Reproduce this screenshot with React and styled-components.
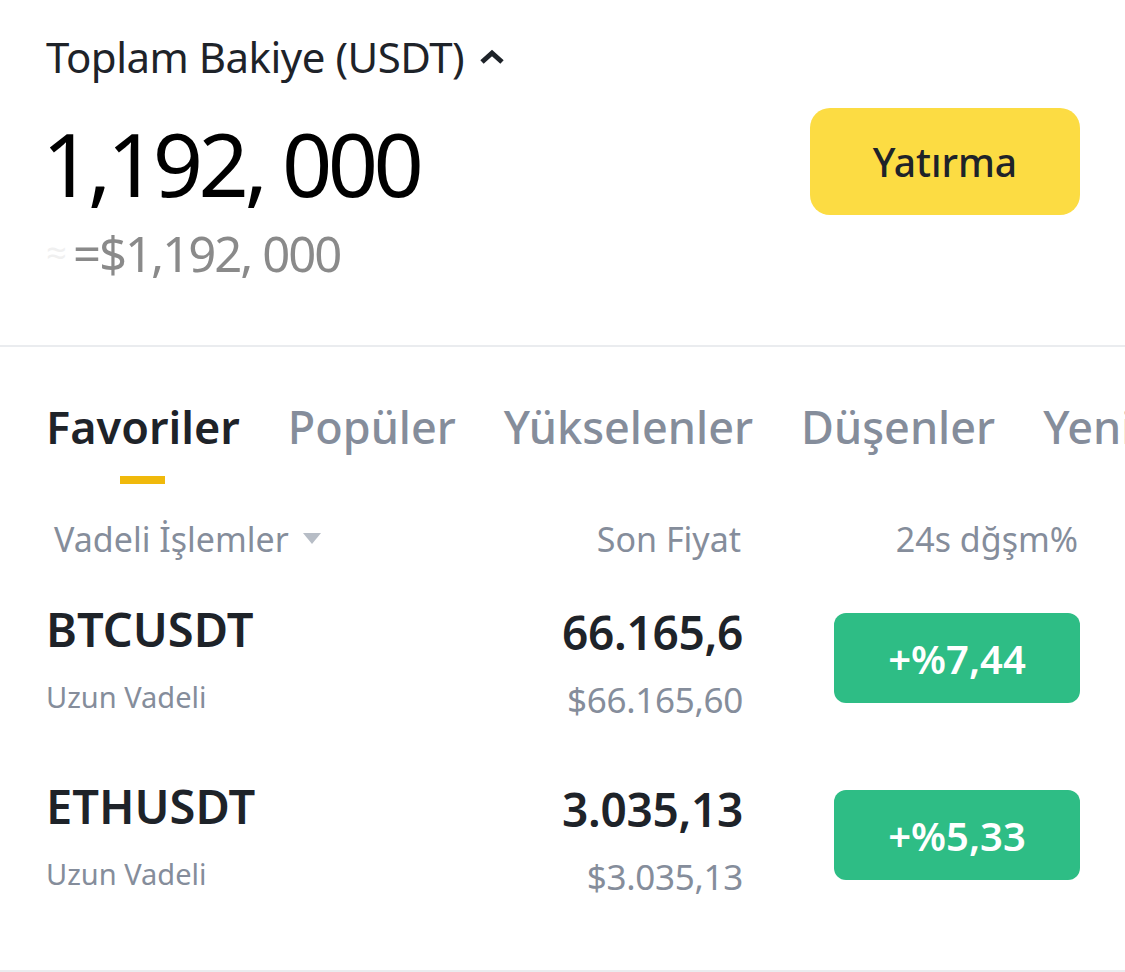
import React from 'react'
import styled, { createGlobalStyle } from 'styled-components'

const GlobalStyle = createGlobalStyle`
  html, body {
    margin: 0;
    padding: 0;
    background: #ffffff;
  }
  body {
    font-family: "Noto Sans", "Open Sans", Roboto, sans-serif;
    color: #1e2329;
    width: 1125px;
    overflow: hidden;
  }
`

const Page = styled.div`
  width: 1125px;
  height: 972px;
  display: flex;
  flex-direction: column;
  overflow: hidden;
`

const BalanceSection = styled.section`
  padding: 31px 45px 0 46px;
  height: 347px;
  box-sizing: border-box;
  border-bottom: 2px solid #eaecef;
`

const TitleRow = styled.div`
  display: flex;
  align-items: center;
  gap: 15px;
  font-size: 42px;
  line-height: 52px;
  letter-spacing: -0.5px;
  color: #1e2329;
`

const BalanceRow = styled.div`
  display: flex;
  justify-content: space-between;
  align-items: flex-start;
`

const Amounts = styled.div`
  display: flex;
  flex-direction: column;
`

const BigAmount = styled.div`
  margin-top: 30px;
  margin-left: -4px;
  font-size: 88px;
  line-height: 100px;
  letter-spacing: -4.5px;
  color: #000;
`

const FiatAmount = styled.div`
  display: flex;
  align-items: center;
  margin-top: 12px;
  font-size: 49px;
  line-height: 56px;
  letter-spacing: -2px;
  color: #8a8a8a;
`

const Ghost = styled.span`
  width: 27px;
  font-size: 36px;
  color: #f0f0f0;
`

const DepositButton = styled.button`
  margin-top: 25px;
  width: 270px;
  height: 107px;
  border: none;
  border-radius: 20px;
  background: #fcdc43;
  color: #1e2329;
  font-family: inherit;
  font-size: 39px;
  font-weight: 500;
  cursor: pointer;
`

const Tabs = styled.nav`
  display: flex;
  gap: 48px;
  padding: 50px 0 0 46px;
  white-space: nowrap;
  overflow: hidden;
`

const Tab = styled.div`
  display: flex;
  flex-direction: column;
  align-items: center;
  font-size: 45px;
  line-height: 60px;
  font-weight: ${p => (p.$active ? 600 : 500)};
  color: ${p => (p.$active ? '#1e2329' : '#858d9b')};

  &::after {
    content: '';
    margin-top: 19px;
    width: 45px;
    height: 8px;
    background: ${p => (p.$active ? '#f0b90b' : 'transparent')};
  }
`

const Grid = styled.div`
  display: grid;
  grid-template-columns: 1fr 300px 246px;
  column-gap: 91px;
  padding: 0 45px 0 46px;
  align-items: start;
`

const HeadRow = styled(Grid)`
  margin-top: 31px;
  padding-left: 54px;
  font-size: 34px;
  line-height: 48px;
  color: #858d9b;
`

const HeadCell = styled.div`
  display: flex;
  align-items: center;
  gap: 14px;
  justify-content: ${p => (p.$right ? 'flex-end' : 'flex-start')};
  margin-right: ${p => (p.$right ? '2px' : '0')};
`

const Row = styled(Grid)`
  margin-top: ${p => (p.$first ? '41px' : '61px')};
`

const Symbol = styled.div`
  font-size: 47px;
  font-weight: 600;
  line-height: 50px;
  color: #1e2329;
`

const SubText = styled.div`
  margin-top: 23px;
  font-size: 29px;
  line-height: 40px;
  color: #858d9b;
`

const PriceCell = styled.div`
  text-align: right;
`

const Price = styled.div`
  margin-top: 3px;
  font-size: 46px;
  font-weight: 600;
  line-height: 50px;
  letter-spacing: -0.3px;
  color: #1e2329;
`

const FiatPrice = styled.div`
  margin-top: 23px;
  font-size: 35px;
  line-height: 40px;
  letter-spacing: -0.3px;
  color: #858d9b;
`

const Badge = styled.div`
  margin-top: 9px;
  height: 90px;
  border-radius: 12px;
  background: #2ebd85;
  color: #fff;
  font-size: 40px;
  font-weight: 600;
  display: flex;
  align-items: center;
  justify-content: center;
`

const BottomLine = styled.div`
  margin-top: auto;
  height: 2px;
  background: #eaecef;
`

const rows = [
  { sym: 'BTCUSDT', price: '66.165,6', fiat: '$66.165,60', change: '+%7,44' },
  { sym: 'ETHUSDT', price: '3.035,13', fiat: '$3.035,13', change: '+%5,33' },
]

const tabs = ['Favoriler', 'Popüler', 'Yükselenler', 'Düşenler', 'Yeni']

export default function App() {
  return (
    <Page>
      <GlobalStyle />
      <BalanceSection>
        <TitleRow>
          Toplam Bakiye (USDT)
          <svg width="26" height="16" viewBox="0 0 26 16">
            <path d="M3 13 L13 4 L23 13" fill="none" stroke="#1e2329" strokeWidth="5" />
          </svg>
        </TitleRow>
        <BalanceRow>
          <Amounts>
            <BigAmount>1,192, 000</BigAmount>
            <FiatAmount>
              <Ghost>≈</Ghost>=$1,192, 000
            </FiatAmount>
          </Amounts>
          <DepositButton>Yatırma</DepositButton>
        </BalanceRow>
      </BalanceSection>

      <Tabs>
        {tabs.map((t, i) => (
          <Tab key={t} $active={i === 0}>{t}</Tab>
        ))}
      </Tabs>

      <HeadRow>
        <HeadCell>
          Vadeli İşlemler
          <svg width="18" height="12" viewBox="0 0 18 12">
            <path d="M0 0 H18 L9 11 Z" fill="#b7bdc6" />
          </svg>
        </HeadCell>
        <HeadCell $right>Son Fiyat</HeadCell>
        <HeadCell $right>24s dğşm%</HeadCell>
      </HeadRow>

      {rows.map((r, i) => (
        <Row key={r.sym} $first={i === 0}>
          <div>
            <Symbol>{r.sym}</Symbol>
            <SubText>Uzun Vadeli</SubText>
          </div>
          <PriceCell>
            <Price>{r.price}</Price>
            <FiatPrice>{r.fiat}</FiatPrice>
          </PriceCell>
          <Badge>{r.change}</Badge>
        </Row>
      ))}

      <BottomLine />
    </Page>
  )
}
